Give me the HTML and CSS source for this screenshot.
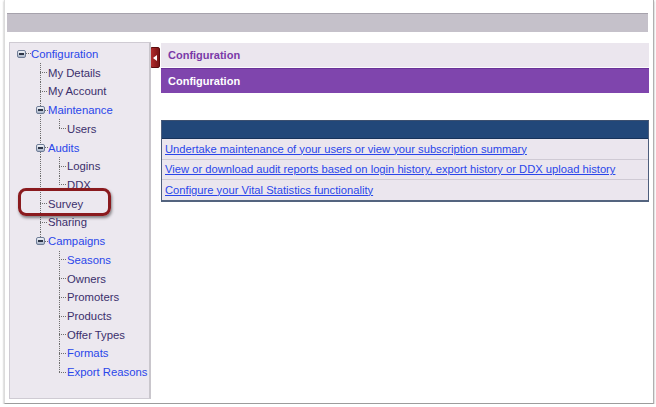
FILE: index.html
```html
<!DOCTYPE html>
<html>
<head>
<meta charset="utf-8">
<title>Configuration</title>
<link rel="stylesheet" href="styles.css">
</head>
<body>
<div class="window">
  <div class="topbar"></div>
  <div class="main">
    <div class="sidebar">
      <div class="row"><span class="gap g7"></span><span class="ico"></span><span class="tr hd w5"></span><span class="lnk">Configuration</span></div>
      <div class="row"><span class="gap g30"></span><span class="tr tee w8"></span><span class="itm">My Details</span></div>
      <div class="row"><span class="gap g30"></span><span class="tr tee w8"></span><span class="itm">My Account</span></div>
      <div class="row"><span class="gap g26"></span><span class="icw"><span class="ico"></span></span><span class="tr hd w3"></span><span class="lnk">Maintenance</span></div>
      <div class="row"><span class="gap g30"></span><span class="tr pipe w19"></span><span class="tr end w8"></span><span class="itm">Users</span></div>
      <div class="row"><span class="gap g26"></span><span class="icw"><span class="ico"></span></span><span class="tr hd w3"></span><span class="lnk">Audits</span></div>
      <div class="row"><span class="gap g30"></span><span class="tr pipe w19"></span><span class="tr tee w8"></span><span class="itm">Logins</span></div>
      <div class="row"><span class="gap g30"></span><span class="tr pipe w19"></span><span class="tr end w8"></span><span class="itm">DDX</span></div>
      <div class="row"><span class="gap g30"></span><span class="tr tee w8"></span><span class="itm">Survey</span></div>
      <div class="row"><span class="gap g30"></span><span class="tr tee w8"></span><span class="itm">Sharing</span></div>
      <div class="row"><span class="gap g26"></span><span class="icw last"><span class="ico"></span></span><span class="tr hd w3"></span><span class="lnk">Campaigns</span></div>
      <div class="row"><span class="gap g30"></span><span class="tr w19"></span><span class="tr tee w8"></span><span class="lnk">Seasons</span></div>
      <div class="row"><span class="gap g30"></span><span class="tr w19"></span><span class="tr tee w8"></span><span class="itm">Owners</span></div>
      <div class="row"><span class="gap g30"></span><span class="tr w19"></span><span class="tr tee w8"></span><span class="itm">Promoters</span></div>
      <div class="row"><span class="gap g30"></span><span class="tr w19"></span><span class="tr tee w8"></span><span class="itm">Products</span></div>
      <div class="row"><span class="gap g30"></span><span class="tr w19"></span><span class="tr tee w8"></span><span class="itm">Offer Types</span></div>
      <div class="row"><span class="gap g30"></span><span class="tr w19"></span><span class="tr tee w8"></span><span class="lnk">Formats</span></div>
      <div class="row"><span class="gap g30"></span><span class="tr w19"></span><span class="tr end w8"></span><span class="lnk">Export Reasons</span></div>
      <div class="mark"></div>
    </div>
    <div class="content">
      <div class="tab"><span class="tri"></span></div>
      <div class="panel">
        <div class="crumb">Configuration</div>
        <div class="title">Configuration</div>
        <div class="table">
          <div class="thead"></div>
          <div class="trow"><a class="tlink" href="#">Undertake maintenance of your users or view your subscription summary</a></div>
          <div class="trow"><a class="tlink" href="#">View or download audit reports based on login history, export history or DDX upload history</a></div>
          <div class="trow"><a class="tlink" href="#">Configure your Vital Statistics functionality</a></div>
        </div>
      </div>
    </div>
  </div>
</div>
</body>
</html>
```
FILE: styles.css
```css
:root {
  --dv: repeating-linear-gradient(to bottom, #6e6e6e 0 1px, transparent 1px 2px);
  --dh: repeating-linear-gradient(to right, #6e6e6e 0 1px, transparent 1px 2px);
}
html, body {
  margin: 0;
  padding: 0;
  background: #fff;
}
body {
  font-family: "Liberation Sans", Arial, "DejaVu Sans", sans-serif;
}
.window {
  margin-left: 4px;
  width: 650px;
  height: 404px;
  box-sizing: border-box;
  border-left: 1px solid #dcdcdc;
  border-right: 1px solid #b0b0b0;
  border-bottom: 1px solid #9c9c9c;
  box-shadow: 0 1px 2px rgba(0,0,0,0.35);
  padding-top: 13px;
  background: #fff;
}
.topbar {
  height: 19px;
  box-sizing: border-box;
  margin: 0 5px 0 2px;
  background: #c5c1ca;
  border-top: 1px solid #a6a2ac;
}
.main {
  display: flex;
  margin-top: 10px;
  height: 357px;
  padding: 0 4px 0 4px;
}
.sidebar {
  position: relative;
  flex: none;
  width: 142px;
  box-sizing: border-box;
  background: #ece8ef;
  border: 1px solid #cfcbd3;
  border-right: 2px solid #c9c6cc;
  padding-top: 1.6px;
  font-size: 11.3px;
}
.row {
  display: flex;
  align-items: center;
  height: 18.73px;
  white-space: nowrap;
}
.gap { flex: none; }
.g7 { width: 7px; }
.g26 { width: 26px; }
.g30 { width: 30px; }
.tr {
  flex: none;
  align-self: stretch;
  background-repeat: no-repeat;
}
.w3 { width: 3px; }
.w5 { width: 5px; }
.w8 { width: 8px; }
.w19 { width: 19px; }
.tee {
  background-image: var(--dv), var(--dh);
  background-size: 1px 100%, 100% 1px;
  background-position: 0 0, 0 50%;
}
.end {
  background-image: var(--dv), var(--dh);
  background-size: 1px 50%, 100% 1px;
  background-position: 0 0, 0 50%;
}
.pipe {
  background-image: var(--dv);
  background-size: 1px 100%;
  background-position: 0 0;
}
.hd {
  background-image: var(--dh);
  background-size: 100% 1px;
  background-position: 0 50%;
}
.icw {
  flex: none;
  align-self: stretch;
  width: 9px;
  display: flex;
  align-items: center;
  justify-content: center;
  background-image: var(--dv);
  background-repeat: no-repeat;
  background-size: 1px 100%;
  background-position: 4px 0;
}
.icw.last {
  background-size: 1px 50%;
}
.ico {
  flex: none;
  width: 9px;
  height: 8px;
  box-sizing: border-box;
  border: 1px solid #6f7d97;
  border-radius: 2px;
  background:
    linear-gradient(#2c3446, #2c3446) center / 5px 2px no-repeat,
    linear-gradient(#f1f3f8, #a9b4c8);
}
.lnk {
  color: #2a46ea;
}
.itm {
  color: #3b2f6c;
}
.mark {
  position: absolute;
  left: 8px;
  top: 145px;
  width: 93px;
  height: 28px;
  box-sizing: border-box;
  border: 3px solid #8a1a1e;
  border-radius: 8px;
  box-shadow: 1px 2px 3px rgba(0,0,0,0.45);
}
.content {
  flex: 1;
  display: flex;
  align-items: flex-start;
  min-width: 0;
}
.tab {
  flex: none;
  width: 10px;
  height: 21px;
  margin-top: 5px;
  margin-left: -1px;
  box-sizing: border-box;
  border: 1px solid #5a0c0e;
  border-radius: 2px;
  background: linear-gradient(to right, #b22c2c, #7a1416);
  display: flex;
  align-items: center;
  justify-content: center;
}
.tri {
  width: 0;
  height: 0;
  border-top: 3px solid transparent;
  border-bottom: 3px solid transparent;
  border-right: 4px solid #fff;
}
.panel {
  flex: 1;
  margin-left: 1px;
  padding-top: 1px;
  min-width: 0;
}
.crumb {
  height: 25px;
  box-sizing: border-box;
  background: #ebe6ee;
  color: #7a3aa8;
  font-weight: bold;
  font-size: 11px;
  line-height: 24px;
  padding-left: 7px;
  border-bottom: 1px solid #fbfafc;
}
.title {
  height: 25px;
  box-sizing: border-box;
  background: #7f45ad;
  border-top: 1px solid #6a3298;
  color: #fff;
  font-weight: bold;
  font-size: 11px;
  line-height: 24px;
  padding-left: 7px;
}
.table {
  margin-top: 27px;
  border: 1px solid #4d5d7c;
  border-top: 1px solid #3d5070;
  border-bottom: 2px solid #54647f;
  background: #ebe6ee;
}
.thead {
  height: 17px;
  background: #224779;
  border-bottom: 1px solid #17325a;
}
.trow {
  height: 19.5px;
  border-bottom: 1px solid #cfcad4;
  display: flex;
  align-items: center;
  padding-left: 3px;
  font-size: 11.2px;
  white-space: nowrap;
}
.trow:last-child {
  border-bottom: 0;
}
.tlink {
  color: #2a46ea;
  text-decoration: underline;
}
```
